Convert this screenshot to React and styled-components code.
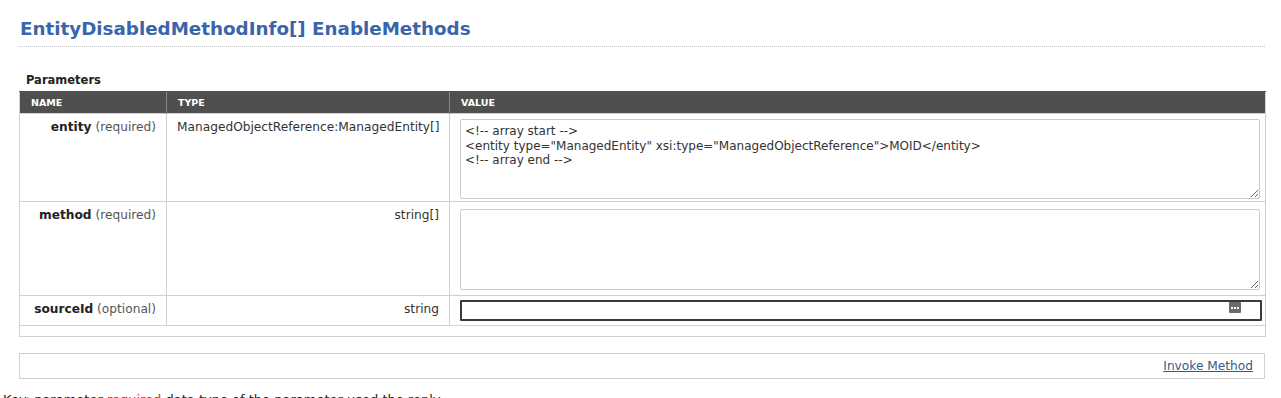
import React from "react";
import styled, { createGlobalStyle } from "styled-components";

const Global = createGlobalStyle`
  html, body { margin: 0; padding: 0; background: #fff; }
  body { font-family: "DejaVu Sans", Verdana, sans-serif; color: #333; overflow: hidden; }
`;

const Page = styled.div`
  width: 1281px;
  height: 398px;
  padding: 17px 16px 0 19px;
  box-sizing: border-box;
  overflow: hidden;
`;

const Title = styled.h1`
  margin: 0;
  padding: 0 0 5px 1px;
  font-size: 18.3px;
  font-weight: bold;
  color: #3a66a9;
  border-bottom: 1px dotted #c8c8c8;
  line-height: 24px;
`;

const SectionLabel = styled.div`
  margin: 26px 0 0 7px;
  font-size: 11.5px;
  font-weight: bold;
  color: #222;
  line-height: 14px;
`;

const Table = styled.table`
  margin-top: 4px;
  width: 1246px;
  border-collapse: collapse;
  border: 1px solid #d0d0d0;
  table-layout: fixed;
`;

const Th = styled.th`
  background: #4f4f4f;
  color: #fff;
  font-size: 9.5px;
  font-weight: bold;
  text-align: left;
  padding: 0 11px;
  height: 21px;
  border-left: 1px solid #888;
  border-top: 1px solid #4f4f4f;
  &:first-child { border-left: none; }
`;

const Td = styled.td`
  border: 1px solid #d0d0d0;
  vertical-align: top;
  font-size: 12.2px;
  color: #333;
  padding: ${(p) => (p.$pad ? p.$pad : "6px 10px 0 10px")};
  text-align: ${(p) => p.$align || "left"};
  height: ${(p) => p.$h}px;
  box-sizing: border-box;
`;

const Name = styled.b`
  color: #222;
`;

const Qual = styled.span`
  color: #555;
`;

const TextArea = styled.textarea`
  display: block;
  width: 800px;
  height: ${(p) => p.$h}px;
  margin: 0;
  padding: 4px 4px;
  box-sizing: border-box;
  border: 1px solid #c9c9c9;
  border-radius: 2px;
  font-family: "DejaVu Sans", Verdana, sans-serif;
  font-size: 12px;
  line-height: 14.5px;
  color: #333;
  resize: both;
  background: #fff;
`;

const InputWrap = styled.div`
  position: relative;
  width: 802px;
`;

const Input = styled.input`
  display: block;
  width: 802px;
  height: 21px;
  box-sizing: border-box;
  border: 2px solid #3a3a3a;
  border-radius: 1px;
  background: #fff;
  outline: none;
`;

const DotsBadge = styled.span`
  position: absolute;
  right: 21px;
  top: 2px;
  width: 12px;
  height: 11px;
  background: #6b6b6b;
  border-radius: 1px;
  display: flex;
  align-items: center;
  justify-content: center;
`;

const FootCell = styled.td`
  height: 10px;
  padding: 0;
  border-top: 1px solid #d0d0d0;
`;

const ActionBar = styled.div`
  margin-top: 16px;
  width: 1246px;
  height: 26px;
  box-sizing: border-box;
  border: 1px solid #d0d0d0;
  display: flex;
  align-items: center;
  justify-content: flex-end;
  padding-right: 11px;
`;

const Link = styled.a`
  font-size: 12.2px;
  color: #39598a;
  text-decoration: underline;
  cursor: pointer;
`;

const Note = styled.div`
  margin: 13px 0 0 -16px;
  font-size: 13px;
  color: #222;
  white-space: nowrap;
`;

const Red = styled.span`
  color: #a33;
`;

export default function App() {
  return (
    <>
      <Global />
      <Page>
        <Title>EntityDisabledMethodInfo[] EnableMethods</Title>
        <SectionLabel>Parameters</SectionLabel>
        <Table>
          <colgroup>
            <col style={{ width: 147 }} />
            <col style={{ width: 283 }} />
            <col style={{ width: 816 }} />
          </colgroup>
          <thead>
            <tr>
              <Th>NAME</Th>
              <Th>TYPE</Th>
              <Th>VALUE</Th>
            </tr>
          </thead>
          <tbody>
            <tr>
              <Td $align="right" $h={88}>
                <Name>entity</Name> <Qual>(required)</Qual>
              </Td>
              <Td $align="right" $h={88}>ManagedObjectReference:ManagedEntity[]</Td>
              <Td $h={88} $pad="5px 0 0 10px">
                <TextArea
                  $h={80}
                  defaultValue={`<!-- array start -->\n<entity type="ManagedEntity" xsi:type="ManagedObjectReference">MOID</entity>\n<!-- array end -->`}
                />
              </Td>
            </tr>
            <tr>
              <Td $align="right" $h={94}>
                <Name>method</Name> <Qual>(required)</Qual>
              </Td>
              <Td $align="right" $h={94}>string[]</Td>
              <Td $h={94} $pad="7px 0 0 10px">
                <TextArea $h={81} defaultValue="" />
              </Td>
            </tr>
            <tr>
              <Td $align="right" $h={30}>
                <Name>sourceId</Name> <Qual>(optional)</Qual>
              </Td>
              <Td $align="right" $h={30}>string</Td>
              <Td $h={30} $pad="4px 0 0 10px">
                <InputWrap>
                  <Input type="text" />
                  <DotsBadge>
                    <svg width="8" height="2" viewBox="0 0 8 2">
                      <rect x="0" y="0" width="2" height="2" fill="#fff" />
                      <rect x="3" y="0" width="2" height="2" fill="#fff" />
                      <rect x="6" y="0" width="2" height="2" fill="#fff" />
                    </svg>
                  </DotsBadge>
                </InputWrap>
              </Td>
            </tr>
          </tbody>
          <tfoot>
            <tr>
              <FootCell colSpan={3} />
            </tr>
          </tfoot>
        </Table>
        <ActionBar>
          <Link>Invoke Method</Link>
        </ActionBar>
        <Note>
          Key: parameter <Red>required</Red> data type of the parameter used the reply
        </Note>
      </Page>
    </>
  );
}
